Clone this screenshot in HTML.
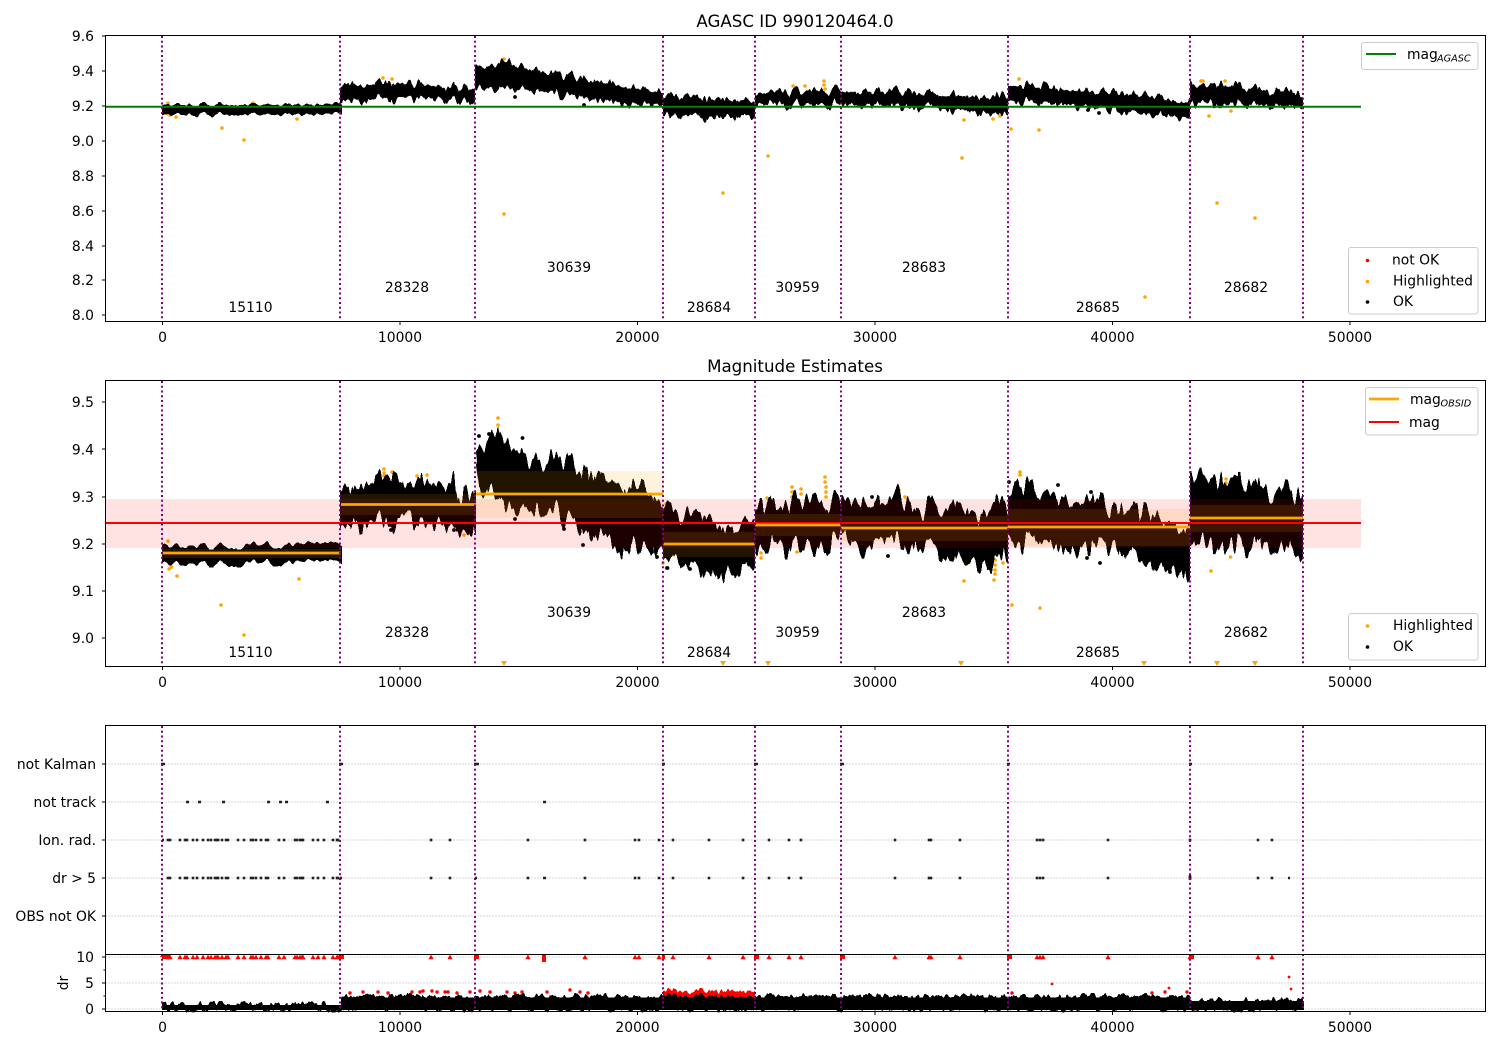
<!DOCTYPE html>
<html>
<head>
<meta charset="utf-8">
<title>AGASC ID 990120464.0</title>
<style>
html,body{margin:0;padding:0;background:#fff;}
svg{display:block;}
text{font-family:"DejaVu Sans","Liberation Sans",sans-serif;font-size:13.89px;fill:#000;}
.t{font-size:16.67px;text-anchor:middle;}
.r{text-anchor:end;}
.m{text-anchor:middle;}
.s{font-size:9.7px;font-style:italic;}
.ax{fill:none;stroke:#000;stroke-width:1;shape-rendering:crispEdges;}
.tk{fill:none;stroke:#000;stroke-width:1;shape-rendering:crispEdges;}
.v{stroke:#800080;stroke-width:2;stroke-dasharray:2 2.75;fill:none;}
.g{stroke:#b0b0b0;stroke-width:1;stroke-dasharray:1.1 1.9;fill:none;shape-rendering:crispEdges;}
.lg{fill:#fff;fill-opacity:.8;stroke:#ccc;stroke-width:1;}
.od{fill:none;stroke:#ffa500;stroke-width:3.6;stroke-linecap:round;}
.bd{fill:none;stroke:#000;stroke-width:3.8;stroke-linecap:round;}
.rd{fill:none;stroke:#f00;stroke-width:3.4;stroke-linecap:round;}
</style>
</head>
<body>
<svg width="1500" height="1050" viewBox="0 0 1500 1050" xmlns="http://www.w3.org/2000/svg">
<defs>
<filter id="a3" filterUnits="userSpaceOnUse" x="0" y="0" width="1500" height="1050" color-interpolation-filters="sRGB"><feTurbulence type="fractalNoise" baseFrequency="0.12 0.0005" numOctaves="2" seed="4"/><feColorMatrix type="matrix" values="2 0 0 0 -.5 0 0 0 0 .5 0 0 0 0 0 0 0 0 0 1" result="o"/><feDisplacementMap in="SourceGraphic" in2="o" scale="6" xChannelSelector="G" yChannelSelector="R"/></filter>
<filter id="a7" filterUnits="userSpaceOnUse" x="0" y="0" width="1500" height="1050" color-interpolation-filters="sRGB"><feTurbulence type="fractalNoise" baseFrequency="0.12 0.0005" numOctaves="2" seed="4"/><feColorMatrix type="matrix" values="2 0 0 0 -.5 0 0 0 0 .5 0 0 0 0 0 0 0 0 0 1" result="o"/><feDisplacementMap in="SourceGraphic" in2="o" scale="14" xChannelSelector="G" yChannelSelector="R"/></filter>
<filter id="a7b" filterUnits="userSpaceOnUse" x="0" y="0" width="1500" height="1050" color-interpolation-filters="sRGB"><feTurbulence type="fractalNoise" baseFrequency="0.16 0.0005" numOctaves="2" seed="12"/><feColorMatrix type="matrix" values="2 0 0 0 -.5 0 0 0 0 .5 0 0 0 0 0 0 0 0 0 1" result="o"/><feDisplacementMap in="SourceGraphic" in2="o" scale="12" xChannelSelector="G" yChannelSelector="R"/></filter>
<filter id="b6" filterUnits="userSpaceOnUse" x="0" y="0" width="1500" height="1050" color-interpolation-filters="sRGB"><feTurbulence type="fractalNoise" baseFrequency="0.12 0.0005" numOctaves="2" seed="4"/><feColorMatrix type="matrix" values="2 0 0 0 -.5 0 0 0 0 .5 0 0 0 0 0 0 0 0 0 1" result="o"/><feDisplacementMap in="SourceGraphic" in2="o" scale="9" xChannelSelector="G" yChannelSelector="R"/></filter>
<filter id="b16" filterUnits="userSpaceOnUse" x="0" y="0" width="1500" height="1050" color-interpolation-filters="sRGB"><feTurbulence type="fractalNoise" baseFrequency="0.12 0.0005" numOctaves="2" seed="4"/><feColorMatrix type="matrix" values="2 0 0 0 -.5 0 0 0 0 .5 0 0 0 0 0 0 0 0 0 1" result="o"/><feDisplacementMap in="SourceGraphic" in2="o" scale="32" xChannelSelector="G" yChannelSelector="R"/></filter>
<filter id="b16b" filterUnits="userSpaceOnUse" x="0" y="0" width="1500" height="1050" color-interpolation-filters="sRGB"><feTurbulence type="fractalNoise" baseFrequency="0.16 0.0005" numOctaves="2" seed="12"/><feColorMatrix type="matrix" values="2 0 0 0 -.5 0 0 0 0 .5 0 0 0 0 0 0 0 0 0 1" result="o"/><feDisplacementMap in="SourceGraphic" in2="o" scale="26" xChannelSelector="G" yChannelSelector="R"/></filter>
<filter id="c4" filterUnits="userSpaceOnUse" x="0" y="0" width="1500" height="1050" color-interpolation-filters="sRGB"><feTurbulence type="fractalNoise" baseFrequency="0.22 0.0005" numOctaves="2" seed="9"/><feColorMatrix type="matrix" values="2 0 0 0 -.5 0 0 0 0 .5 0 0 0 0 0 0 0 0 0 1" result="o"/><feDisplacementMap in="SourceGraphic" in2="o" scale="6" xChannelSelector="G" yChannelSelector="R"/></filter>
<marker id="tri" markerUnits="userSpaceOnUse" markerWidth="6" markerHeight="6" refX="3" refY="3" overflow="visible"><path d="M3 .6L5.6 5.2H.4z" fill="#f00"/></marker>
<marker id="sq" markerUnits="userSpaceOnUse" markerWidth="4" markerHeight="4" refX="1.3" refY="1.3" overflow="visible"><rect width="2.6" height="2.6" fill="#222"/></marker>
<polyline id="pts" fill="none" stroke="none" points="168,0 170,0 180,0 185,0 187,0 193,0 197,0 203,0 208,0 211,0 215,0 217,0 218,0 222,0 226,0 228,0 238,0 244,0 251,0 253,0 256,0 261,0 266,0 268,0 279,0 284,0 295,0 297,0 300,0 302,0 303,0 313,0 318,0 324,0 333,0 337,0 338,0 431,0 450,0 528,0 585,0 635,0 639,0 659,0 673,0 709,0 743,0 769,0 789,0 801,0 895,0 929,0 931,0 960,0 1037,0 1040,0 1043,0 1108,0 1190,0 1258,0 1272,0"/>
<g id="c1" fill="#000">
<path d="M340 88L345 84L360 86L380 84L400 84L420 85L440 87L455 88L475 90L475 101L455 100L440 98L420 98L400 97L380 98L360 99L345 100L340 100Z"/>
<path d="M475 68L490 66L504 63L520 67L540 72L560 76L580 79L600 83L620 87L640 90L663 93L663 103L640 104L620 102L600 99L580 96L560 93L540 90L520 88L504 87L490 87L475 86Z"/>
<path d="M663 97L690 98L720 100L755 102L755 116L730 116L710 116L690 115L663 114Z"/>
<path d="M755 95L780 93L800 92L825 91L841 92L841 104L800 104L770 103L755 105Z"/>
<path d="M841 93L880 92L910 93L940 95L970 97L1008 98L1008 114L985 112L960 109L930 106L900 105L870 104L841 103Z"/>
<path d="M1008 86L1030 86L1060 90L1090 92L1120 94L1150 97L1190 104L1190 117L1160 114L1130 111L1100 107L1070 104L1040 101L1008 100Z"/>
<path d="M1190 87L1220 86L1250 89L1280 92L1303 95L1303 106L1270 105L1240 103L1210 102L1190 103Z"/>
</g>
<g id="c2" fill="#000">
<path d="M340 490L345 484L353 494L360 484L372 481L383 479L393 479L406 492L418 481L427 481L437 487L454 484L460 504L471 492L476 492L476 523L464 528L437 521L406 516L391 524L368 516L345 524L340 520Z"/>
<path d="M476 454L488 439L498 429L506 454L517 446L529 461L552 461L569 466L578 476L596 477L613 491L636 492L663 506L663 543L643 551L620 546L590 529L565 519L559 506L529 503L506 508L494 489L479 486Z"/>
<path d="M663 507L673 517L690 519L700 514L715 526L727 532L755 526L755 568L738 573L723 571L709 573L688 561L665 559L663 555Z"/>
<path d="M755 511L780 511L792 507L801 502L811 511L826 502L841 509L841 533L830 544L815 544L797 544L776 543L759 548L755 545Z"/>
<path d="M841 507L849 504L860 502L880 509L899 499L918 512L937 506L956 507L975 516L996 507L1008 514L1008 556L994 561L968 561L945 551L929 543L899 536L864 544L845 534L841 530Z"/>
<path d="M1008 494L1017 481L1029 487L1044 494L1059 496L1073 507L1092 501L1109 509L1124 511L1147 519L1167 526L1190 537L1190 574L1163 563L1134 556L1109 543L1090 543L1071 546L1040 533L1023 539L1012 533L1008 530Z"/>
<path d="M1190 484L1215 483L1240 485L1270 493L1303 498L1303 548L1270 543L1240 542L1210 541L1190 541Z"/>
</g>
</defs>
<rect width="1500" height="1050" fill="#fff"/>

<!-- PANEL 1 -->
<path class="od" d="M222 128h.01M244 140h.01M176 117h.01M170 115h.01M168 114h.01M297 119h.01M723 193h.01M504 214h.01M768 156h.01M962 158h.01M964 120h.01M1011 129h.01M1039 130h.01M1145 297h.01M1209 116h.01M1217 203h.01M1255 218h.01M1231 111h.01M993 119h.01M1000 116h.01M504 59h.01M383 78h.01M392 79h.01M824 81h.01M824 85h.01M825 89h.01M793 86h.01M805 86h.01M1019 79h.01M1201 81h.01M1203 81h.01M1225 81h.01M168 103h.01M253 103h.01"/>
<path fill="#000" filter="url(#a3)" d="M162 104.500L342 104.500L342 114.500L162 114.500Z"/>
<use href="#c1" filter="url(#a7)"/>
<use href="#c1" filter="url(#a7b)"/>
<path class="bd" d="M515 97h.01M584 105h.01M1088 110h.01M1099 113h.01M1245 104h.01"/>
<path fill="none" stroke="#008000" stroke-width="2" d="M105.500 106.800H1361"/>
<g class="v"><path d="M162 36V321M340 36V321M475 36V321M663 36V321M755 36V321M841 36V321M1008 36V321M1190 36V321M1303 36V321"/></g>
<rect class="ax" x="105.500" y="35.500" width="1380" height="286"/>
<path class="tk" d="M102 36H105.500M102 71H105.500M102 106H105.500M102 141H105.500M102 176H105.500M102 211H105.500M102 246H105.500M102 280H105.500M102 315H105.500M162.500 321.500V325M400 321.500V325M637.500 321.500V325M875 321.500V325M1112.500 321.500V325M1350 321.500V325"/>
<text class="t" x="795" y="27">AGASC ID 990120464.0</text>
<text class="r" x="94" y="41">9.6</text><text class="r" x="94" y="76">9.4</text><text class="r" x="94" y="111">9.2</text><text class="r" x="94" y="146">9.0</text><text class="r" x="94" y="181">8.8</text><text class="r" x="94" y="216">8.6</text><text class="r" x="94" y="251">8.4</text><text class="r" x="94" y="285">8.2</text><text class="r" x="94" y="320">8.0</text>
<text class="m" x="162.500" y="342">0</text><text class="m" x="400" y="342">10000</text><text class="m" x="637.500" y="342">20000</text><text class="m" x="875" y="342">30000</text><text class="m" x="1112.500" y="342">40000</text><text class="m" x="1350" y="342">50000</text>
<text class="m" x="250.500" y="312">15110</text><text class="m" x="407" y="292">28328</text><text class="m" x="569" y="272">30639</text><text class="m" x="709" y="312">28684</text><text class="m" x="797.500" y="292">30959</text><text class="m" x="924" y="272">28683</text><text class="m" x="1098" y="312">28685</text><text class="m" x="1246" y="292">28682</text>

<rect class="lg" x="1361.500" y="42.500" width="116.500" height="27" rx="2.500"/>
<path fill="none" stroke="#008000" stroke-width="2" d="M1366 54H1396"/>
<text x="1407" y="59">mag</text><text class="s" x="1437" y="61.500">AGASC</text>
<rect class="lg" x="1348.500" y="247.500" width="129.500" height="66.500" rx="2.500"/>
<circle cx="1367.500" cy="260.500" r="1.800" fill="#f00"/><circle cx="1367.500" cy="281.500" r="1.800" fill="#ffa500"/><circle cx="1367.500" cy="302" r="1.800" fill="#000"/>
<text x="1392" y="264.500">not OK</text><text x="1393" y="285.500">Highlighted</text><text x="1393" y="306">OK</text>

<!-- PANEL 2 -->
<path class="od" d="M169 569h.01M171.500 567h.01M177 576h.01M299 579h.01M221 605h.01M244 635h.01M168 541h.01M384 469h.01M384 473h.01M384 476h.01M392 472h.01M417 476h.01M427 475h.01M498 418h.01M498 425h.01M464 535h.01M663 563h.01M666 504h.01M666 509h.01M1012 605h.01M1040 608h.01M1230.500 557h.01M1211 571h.01M964 581h.01M994 580h.01M995 560h.01M995 565h.01M995 570h.01M995 574h.01M968 563h.01M1003 563h.01M761 553h.01M761 558h.01M797 552h.01M767 498h.01M792 487h.01M792 492h.01M792 497h.01M801 489h.01M801 494h.01M825 477h.01M825 482h.01M826 487h.01M826 492h.01M826 497h.01M899 490h.01M905 497h.01M1020 472h.01M1020 475h.01M1203 476h.01M1203 481h.01M1226 479h.01M1226 483h.01M1192 483h.01M1237 483h.01"/>
<path fill="#000" filter="url(#b6)" d="M162 545L342 545L342 563L162 563Z"/>
<use href="#c2" filter="url(#b16)"/>
<use href="#c2" filter="url(#b16b)"/>
<path class="bd" d="M652 552h.01M657 557h.01M667 568h.01M690 569h.01M888 556h.01M1087 558h.01M1100 563h.01M1170 572h.01M583 545h.01M515 519h.01M564 529h.01M391 530h.01M454 530h.01M652 551h.01M667.500 568h.01M522.500 438h.01M479 436h.01M489 434h.01M872 497h.01M1058 485h.01M1091 492h.01M1009 482h.01M1016 483h.01"/>
<rect x="105.500" y="499" width="1255.500" height="49" fill="#f00" fill-opacity=".115"/>
<g fill="#ffa500" fill-opacity=".13">
<rect x="162" y="549" width="179" height="9"/>
<rect x="341" y="494" width="135" height="21"/>
<rect x="476" y="471" width="187" height="47"/>
<rect x="663" y="532" width="92" height="25"/>
<rect x="755" y="514" width="86" height="22"/>
<rect x="841" y="516" width="167" height="25"/>
<rect x="1008" y="509" width="182" height="37"/>
<rect x="1190" y="505" width="113" height="27"/>
</g>
<path fill="none" stroke="#f00" stroke-width="2" d="M105.500 523H1361"/>
<path fill="none" stroke="#ffa500" stroke-width="2.800" d="M162 553H341M341 504.500H476M476 494H663M663 544H755M755 525H841M841 528H1008M1008 527H1190M1190 518H1303"/>
<g class="v"><path d="M162 381V666M340 381V666M475 381V666M663 381V666M755 381V666M841 381V666M1008 381V666M1190 381V666M1303 381V666"/></g>
<path fill="#ffa500" d="M501 661h6l-3 5zM720 661h6l-3 5zM765 661h6l-3 5zM958 661h6l-3 5zM1141 661h6l-3 5zM1214 661h6l-3 5zM1252 661h6l-3 5z"/>
<rect class="ax" x="105.500" y="380.500" width="1380" height="286"/>
<path class="tk" d="M102 402H105.500M102 449H105.500M102 497H105.500M102 544H105.500M102 591H105.500M102 638H105.500M162.500 666.500V670M400 666.500V670M637.500 666.500V670M875 666.500V670M1112.500 666.500V670M1350 666.500V670"/>
<text class="t" x="795" y="372">Magnitude Estimates</text>
<text class="r" x="94" y="407">9.5</text><text class="r" x="94" y="454.500">9.4</text><text class="r" x="94" y="502">9.3</text><text class="r" x="94" y="549">9.2</text><text class="r" x="94" y="596">9.1</text><text class="r" x="94" y="643">9.0</text>
<text class="m" x="162.500" y="687">0</text><text class="m" x="400" y="687">10000</text><text class="m" x="637.500" y="687">20000</text><text class="m" x="875" y="687">30000</text><text class="m" x="1112.500" y="687">40000</text><text class="m" x="1350" y="687">50000</text>
<text class="m" x="250.500" y="657">15110</text><text class="m" x="407" y="637">28328</text><text class="m" x="569" y="617">30639</text><text class="m" x="709" y="657">28684</text><text class="m" x="797.500" y="637">30959</text><text class="m" x="924" y="617">28683</text><text class="m" x="1098" y="657">28685</text><text class="m" x="1246" y="637">28682</text>

<rect class="lg" x="1365.500" y="387.500" width="112.500" height="47.500" rx="2.500"/>
<path fill="none" stroke="#ffa500" stroke-width="2.800" d="M1369 399H1399"/>
<path fill="none" stroke="#f00" stroke-width="2" d="M1369 422H1399"/>
<text x="1410" y="404">mag</text><text class="s" x="1440.500" y="406.500">OBSID</text>
<text x="1409" y="427">mag</text>
<rect class="lg" x="1348.500" y="613.500" width="129.500" height="46.500" rx="2.500"/>
<circle cx="1367.500" cy="626" r="1.800" fill="#ffa500"/><circle cx="1367.500" cy="647" r="1.800" fill="#000"/>
<text x="1393" y="630">Highlighted</text><text x="1393" y="651">OK</text>

<!-- PANEL 3 -->
<path class="g" d="M105.500 764H1485M105.500 802H1485M105.500 840H1485M105.500 878H1485M105.500 916H1485M105.500 957H1485M105.500 983H1485M105.500 1009H1485"/>
<path fill="none" stroke="#222" stroke-width="2.600" d="M161 764h4M339 764h4M474 764h5M662 764h3M754 764h4M840 764h4M1007 764h3M1189 764h3"/>
<path fill="none" stroke="#222" stroke-width="2.600" d="M186 802h3M198 802h3M222 802h3M267 802h3M279 802h3M285 802h3M326 802h3M543 802h3"/>
<use href="#pts" y="840" marker-start="url(#sq)" marker-mid="url(#sq)" marker-end="url(#sq)"/>
<use href="#pts" y="878" marker-start="url(#sq)" marker-mid="url(#sq)" marker-end="url(#sq)"/>
<path fill="none" stroke="#222" stroke-width="2.600" d="M543 878h3M1288 878h2M162 840h2M340 878h2M475 878h2M1190 875v5"/>
<use href="#pts" y="957" marker-start="url(#tri)" marker-mid="url(#tri)" marker-end="url(#tri)"/>
<path fill="#f00" d="M160 957l2-3.500 2 3.500zM162 954h8v5h-8zM339 954h5v5h-5zM474 954h5v5h-5zM662 955h3v4h-3zM754 954h5v5h-5zM840 954h5v5h-5zM1007 954h5v5h-5zM1189 954h5v5h-5zM542 955h4v7h-4z"/>
<path class="rd" d="M350 993h.01M363 992h.01M378 992h.01M388 993h.01M412 992h.01M420 992h.01M423 991h.01M432 991h.01M437 992h.01M445 992h.01M448 992h.01M457 993h.01M470 992h.01M480 991h.01M490 992h.01M507 992h.01M515 993h.01M522 992h.01M547 992h.01M570 990h.01M580 992h.01M588 993h.01M1012 993h.01M1152 993h.01M1165 992h.01M1187 992h.01"/>
<path fill="none" stroke="#f00" stroke-width="2.800" stroke-linecap="round" d="M1052 984h.01M1169 988h.01M1289 977h.01M1291 989h.01"/>
<g fill="#f00" filter="url(#c4)"><path d="M663 991L700 991L735 990L755 991L755 1000L663 1000Z"/></g>
<g fill="#000" filter="url(#c4)">
<path d="M162 1004L341 1004L341 1009.500L162 1009.500Z"/>
<path d="M341 996L476 996L663 996L755 996L760 996L1190 996L1190 1009.500L341 1009.500Z"/>
<path d="M1190 1000L1303 1000L1303 1009.500L1190 1009.500Z"/>
</g>
<path fill="#000" d="M162 1005H341V1010H162ZM341 997.500H1190V1010H341ZM1190 1001H1304V1010H1190Z"/>
<g class="v"><path d="M162 726V1011M340 726V1011M475 726V1011M663 726V1011M755 726V1011M841 726V1011M1008 726V1011M1190 726V1011M1303 726V1011"/></g>
<path fill="none" stroke="#000" stroke-width="1" d="M105.500 954.500H1485.500"/>
<rect class="ax" x="105.500" y="725.500" width="1380" height="286"/>
<path class="tk" d="M102 764H105.500M102 802H105.500M102 840H105.500M102 878H105.500M102 916H105.500M102 957H105.500M102 983H105.500M102 1009H105.500M103.500 970H105.500M103.500 996H105.500M162.500 1011.500V1015M400 1011.500V1015M637.500 1011.500V1015M875 1011.500V1015M1112.500 1011.500V1015M1350 1011.500V1015"/>
<text class="r" x="96" y="769">not Kalman</text><text class="r" x="96" y="807">not track</text><text class="r" x="96" y="845">Ion. rad.</text><text class="r" x="96" y="883">dr &gt; 5</text><text class="r" x="96" y="921">OBS not OK</text>
<text class="r" x="94" y="962">10</text><text class="r" x="94" y="988">5</text><text class="r" x="94" y="1014">0</text>
<text class="m" x="162.500" y="1032">0</text><text class="m" x="400" y="1032">10000</text><text class="m" x="637.500" y="1032">20000</text><text class="m" x="875" y="1032">30000</text><text class="m" x="1112.500" y="1032">40000</text><text class="m" x="1350" y="1032">50000</text>
<text class="m" transform="translate(68 983) rotate(-90)">dr</text>
</svg>
</body>
</html>
